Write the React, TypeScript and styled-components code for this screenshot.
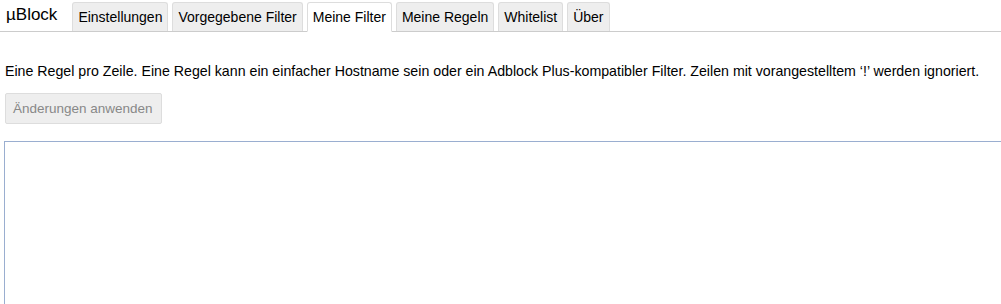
import styled, { createGlobalStyle } from "styled-components";

const GlobalStyle = createGlobalStyle`
	html, body {
		margin: 0;
		padding: 0;
		background: #fff;
		overflow: hidden;
	}
	body {
		font-family: "Liberation Sans", Arial, sans-serif;
		color: #000;
	}
`;

const TabBar = styled.nav`
	display: flex;
	align-items: flex-end;
	gap: 4px;
	height: 31px;
	padding: 0 0 0 6px;
	border-bottom: 1px solid #ccc;
	& > .logo {
		font-size: 17px;
		align-self: center;
		margin: 0 11px 2px 0;
		color: #000;
	}
`;

const Tab = styled.span<{ $active?: boolean }>`
	display: flex;
	align-items: center;
	height: 28px;
	padding: 0 5px;
	font-size: 14px;
	color: #000;
	background-color: ${(p) => (p.$active ? "#fff" : "#eee")};
	border: 1px solid #ddd;
	border-bottom: ${(p) => (p.$active ? "1px solid #fff" : "none")};
	border-radius: 3px 3px 0 0;
	margin-bottom: ${(p) => (p.$active ? "-1px" : "0")};
`;

const Content = styled.main`
	display: flex;
	flex-direction: column;
	align-items: flex-start;
	padding: 31px 0 0 5px;
	& > p {
		margin: 0;
		font-size: 14.2px;
	}
`;

const ApplyButton = styled.button`
	margin-top: 14px;
	height: 31px;
	padding: 0 8px 0 7px;
	font-family: inherit;
	font-size: 13.5px;
	color: #888;
	background-color: #eee;
	border: 1px solid #ddd;
	border-radius: 2px;
`;

const Editor = styled.textarea`
	align-self: stretch;
	margin: 17px 0 0 -1px;
	height: 170px;
	border: 1px solid #9aaed0;
	border-right: none;
	outline: none;
	resize: none;
	font-family: "Liberation Mono", monospace;
`;

const tabs = ["Einstellungen", "Vorgegebene Filter", "Meine Filter", "Meine Regeln", "Whitelist", "Über"];

export default function App() {
	return (
		<>
			<GlobalStyle />
			<TabBar>
				<span className="logo">µBlock</span>
				{tabs.map((t) => (
					<Tab key={t} $active={t === "Meine Filter"}>
						{t}
					</Tab>
				))}
			</TabBar>
			<Content>
				<p>
					Eine Regel pro Zeile. Eine Regel kann ein einfacher Hostname sein oder ein Adblock Plus-kompatibler Filter. Zeilen mit vorangestelltem ‘!’ werden ignoriert.
				</p>
				<ApplyButton disabled>Änderungen anwenden</ApplyButton>
				<Editor spellCheck={false} />
			</Content>
		</>
	);
}
